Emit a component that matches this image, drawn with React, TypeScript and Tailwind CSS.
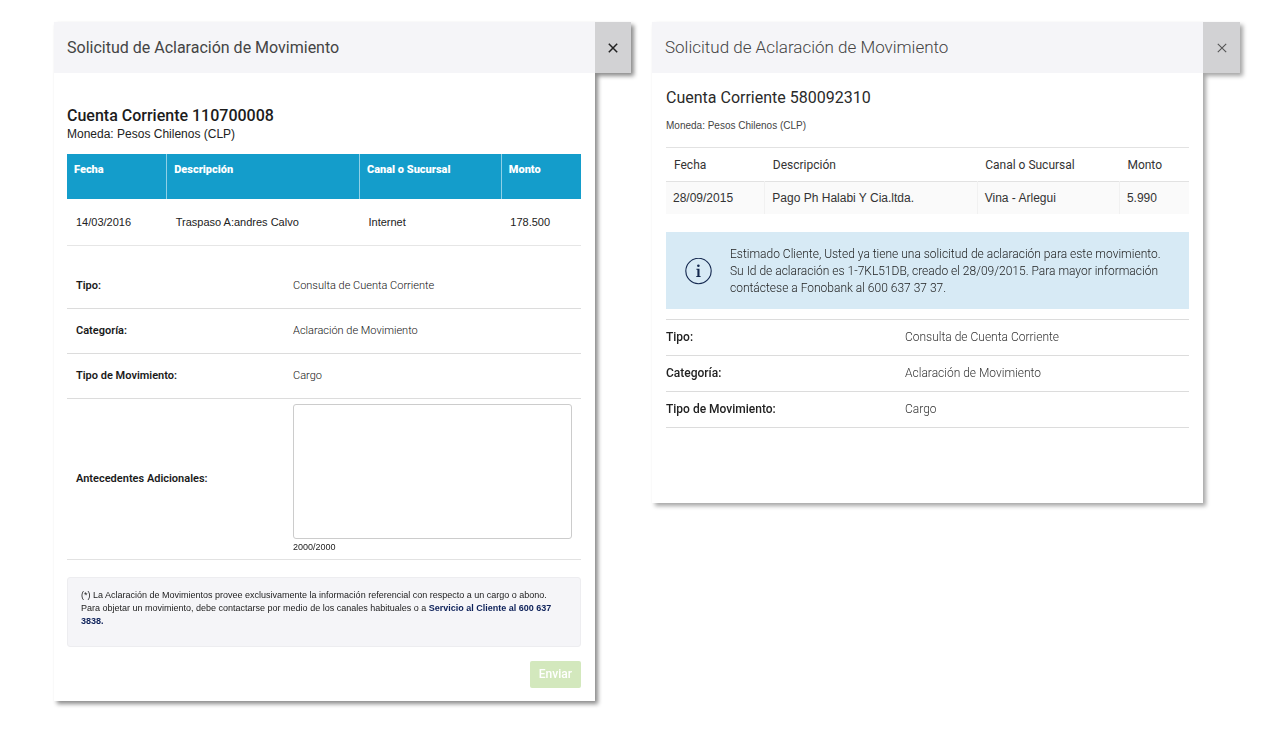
import { useState, type ReactNode } from "react";

const ARIAL = "font-['Liberation_Sans',Arial,sans-serif]";

function CloseIcon({ bold }: { bold?: boolean }) {
  return (
    <svg width="10" height="10" viewBox="0 0 10 10" fill="none" stroke="currentColor" strokeWidth={bold ? 1.5 : 1.1} aria-hidden="true">
      <path d="M0.8 0.8 9.2 9.2M9.2 0.8 0.8 9.2" />
    </svg>
  );
}

type DialogProps = {
  title: ReactNode;
  strong?: boolean;
  children: ReactNode;
};

function Dialog({ title, strong, children }: DialogProps) {
  return (
    <section
      role="dialog"
      className={
        strong
          ? "flex min-w-0 items-start drop-shadow-[3px_3px_2px_rgba(0,0,0,0.45)]"
          : "flex min-w-0 items-start drop-shadow-[3px_3px_2px_rgba(0,0,0,0.35)]"
      }
    >
      <div className="min-w-0 flex-1 bg-white">
        <header className="flex h-[51px] items-center bg-[#f5f5f8] px-[13px]">{title}</header>
        {children}
      </div>
      <button
        type="button"
        aria-label="Cerrar"
        className={
          strong
            ? "flex h-[51px] w-9 items-center justify-center bg-[#d2d2d4] text-[#222]"
            : "flex h-[51px] w-[37px] items-center justify-center bg-[#d2d2d4] text-[#555]"
        }
      >
        <CloseIcon bold={strong} />
      </button>
    </section>
  );
}

const requestDetails = [
  ["Tipo:", "Consulta de Cuenta Corriente"],
  ["Categoría:", "Aclaración de Movimiento"],
  ["Tipo de Movimiento:", "Cargo"],
];

const MAX_LENGTH = 2000;

function RequestForm() {
  const [notes, setNotes] = useState("");
  const th = "border-l border-[#8fd0e6] px-[7px] pt-2 text-left align-top font-black first:border-l-0";
  return (
    <Dialog
      strong
      title={<h1 className="text-[16px] text-[#444]">Solicitud de Aclaración de Movimiento</h1>}
    >
      <div className="pt-[33px] pr-[14px] pb-[13px] pl-[13px]">
        <h2 className="text-[16px] leading-5 font-medium text-[#1c1c1c]">Cuenta Corriente 110700008</h2>
        <p className={`${ARIAL} text-[12px] leading-4 text-[#222]`}>Moneda: Pesos Chilenos (CLP)</p>

        <table className="mt-3 w-full table-fixed border-collapse">
          <colgroup>
            <col className="w-[19.4%]" />
            <col className="w-[37.5%]" />
            <col className="w-[27.6%]" />
            <col className="w-[15.5%]" />
          </colgroup>
          <thead>
            <tr className="h-[45px] bg-[#149dcb] text-[11px] leading-4 text-white">
              <th className={th}>Fecha</th>
              <th className={th}>Descripción</th>
              <th className={th}>Canal o Sucursal</th>
              <th className={th}>Monto</th>
            </tr>
          </thead>
          <tbody>
            <tr className={`${ARIAL} h-[46px] border-b border-[#e6e6e6] text-[11px] leading-4 text-[#222]`}>
              <td className="px-[9px]">14/03/2016</td>
              <td className="px-[9px]">Traspaso A:andres Calvo</td>
              <td className="px-[9px]">Internet</td>
              <td className="px-[9px]">178.500</td>
            </tr>
          </tbody>
        </table>

        <dl className="mt-[18px] text-[11px] leading-4">
          {requestDetails.map(([label, value]) => (
            <div key={label} className="flex h-[45px] items-center border-b border-[#dcdcdc] px-[9px]">
              <dt className="w-[217px] shrink-0 font-semibold text-[#1a1a1a]">{label}</dt>
              <dd className="font-light text-[#111]">{value}</dd>
            </div>
          ))}
        </dl>
        <div className="flex items-center border-b border-[#e2e2e2] px-[9px] pt-[5px] pb-1">
          <label htmlFor="notes" className="w-[217px] shrink-0 text-[11px] leading-4 font-semibold text-[#1a1a1a]">
            Antecedentes Adicionales:
          </label>
          <div className="flex min-w-0 flex-1 flex-col">
            <textarea
              id="notes"
              maxLength={MAX_LENGTH}
              value={notes}
              onChange={(e) => setNotes(e.target.value)}
              className="h-[135px] w-full resize-none rounded-[3px] border border-[#ccc] bg-white p-2 text-[12px] outline-none"
            />
            <span className={`${ARIAL} text-[9px] leading-4 text-[#222]`}>
              {MAX_LENGTH - notes.length}/{MAX_LENGTH}
            </span>
          </div>
        </div>

        <p className={`${ARIAL} mt-[17px] rounded-[3px] border border-[#ededf0] bg-[#f5f5f8] px-[13px] pt-[11px] pb-[18px] text-[9px] leading-[13px] text-[#222]`}>
          (*) La Aclaración de Movimientos provee exclusivamente la información referencial con respecto a un cargo o abono.
          Para objetar un movimiento, debe contactarse por medio de los canales habituales o a{" "}
          <strong className="font-bold text-[#0c2059]">Servicio al Cliente al 600 637 3838.</strong>
        </p>

        <div className="mt-[14px] flex justify-end">
          <button type="button" className="h-[27px] rounded-[2px] bg-[#d3e8bd] px-[9px] text-[12px] font-medium text-white">
            Enviar
          </button>
        </div>
      </div>
    </Dialog>
  );
}

function ExistingRequest() {
  const td = "border-l border-[#f1f1f1] px-[7px] first:border-l-0";
  return (
    <Dialog title={<h1 className="text-[17px] font-light text-[#444]">Solicitud de Aclaración de Movimiento</h1>}>
      <div className="px-[14px] pt-[15px] pb-[75px]">
        <h2 className="text-[16px] leading-5 text-[#2a2a2a]">Cuenta Corriente 580092310</h2>
        <p className={`${ARIAL} mt-[10px] text-[10px] leading-4 text-[#444]`}>Moneda: Pesos Chilenos (CLP)</p>

        <table className="mt-[13px] w-full table-fixed border-collapse border-t border-[#e2e2e2]">
          <colgroup>
            <col className="w-[18.9%]" />
            <col className="w-[40.6%]" />
            <col className="w-[27.2%]" />
            <col className="w-[13.3%]" />
          </colgroup>
          <thead>
            <tr className="h-[34px] border-b border-[#e2e2e2] text-left text-[12px] leading-4 text-[#333]">
              <th className="px-2 font-normal">Fecha</th>
              <th className="px-2 font-normal">Descripción</th>
              <th className="px-2 font-normal">Canal o Sucursal</th>
              <th className="px-2 font-normal">Monto</th>
            </tr>
          </thead>
          <tbody>
            <tr className={`${ARIAL} h-8 bg-[#fafafa] text-[12px] leading-4 text-[#333]`}>
              <td className={td}>28/09/2015</td>
              <td className={td}>Pago Ph Halabi Y Cia.ltda.</td>
              <td className={td}>Vina - Arlegui</td>
              <td className={td}>5.990</td>
            </tr>
          </tbody>
        </table>

        <div role="alert" className="mt-[18px] flex items-center bg-[#d7eaf5] pt-[14px] pr-4 pb-3 pl-[19px]">
          <svg width="27" height="27" viewBox="0 0 27 27" className="shrink-0 text-[#14284f]" aria-hidden="true">
            <circle cx="13.5" cy="13" r="12.7" fill="none" stroke="currentColor" strokeWidth="1.1" />
            <circle cx="13.4" cy="7.8" r="1.3" fill="currentColor" />
            <path d="M11.4 10.7h3.1v7.3h1.1v1h-4.3v-1h1.1v-6.3h-1z" fill="currentColor" />
          </svg>
          <p className="ml-[18px] text-[12px] leading-[17px] font-light text-[#222]">
            Estimado Cliente, Usted ya tiene una solicitud de aclaración para este movimiento. Su Id de aclaración es
            1-7KL51DB, creado el 28/09/2015. Para mayor información contáctese a Fonobank al 600 637 37 37.
          </p>
        </div>

        <dl className="mt-[10px] border-t border-[#dcdcdc] text-[12px] leading-4">
          {requestDetails.map(([label, value]) => (
            <div key={label} className="flex h-9 items-center border-b border-[#dcdcdc]">
              <dt className="w-[239px] shrink-0 font-medium text-[#222]">{label}</dt>
              <dd className="font-light text-[#333]">{value}</dd>
            </div>
          ))}
        </dl>
      </div>
    </Dialog>
  );
}

export default function App() {
  return (
    <main className="grid min-h-screen grid-cols-[577fr_588fr] items-start gap-[21px] bg-white pt-[22px] pr-[31px] pb-8 pl-[54px] font-[Roboto,sans-serif]">
      <RequestForm />
      <ExistingRequest />
    </main>
  );
}
